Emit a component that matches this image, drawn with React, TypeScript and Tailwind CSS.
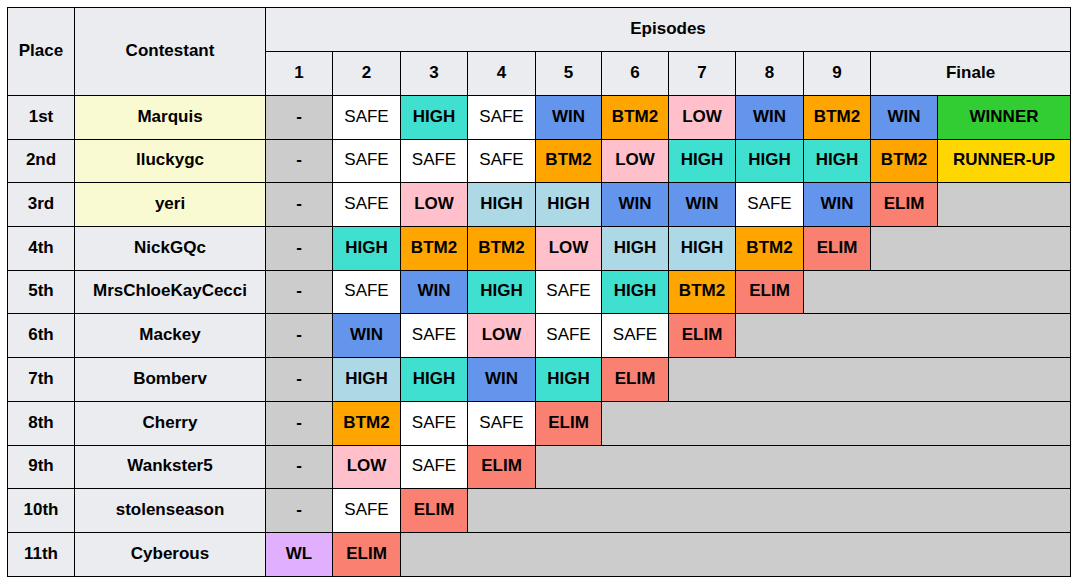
import React from "react";

type Result =
  | "-"
  | "SAFE"
  | "HIGH"
  | "TOP"
  | "WIN"
  | "LOW"
  | "BTM2"
  | "ELIM"
  | "WL"
  | "WINNER"
  | "RUNNER-UP";

interface Contestant {
  place: string;
  name: string;
  finalist?: boolean;
  results: Result[];
}

// HIGH = turquoise, TOP = light blue (shown as "HIGH")
const styles: Record<Result, string> = {
  "-": "bg-[#cccccc] font-bold",
  SAFE: "bg-white",
  HIGH: "bg-[#40e0d0] font-bold",
  TOP: "bg-[#add8e6] font-bold",
  WIN: "bg-[#6495ed] font-bold",
  LOW: "bg-[#ffc0cb] font-bold",
  BTM2: "bg-[#ffa500] font-bold",
  ELIM: "bg-[#fa8072] font-bold",
  WL: "bg-[#e0b0ff] font-bold",
  WINNER: "bg-[#32cd32] font-bold",
  "RUNNER-UP": "bg-[#ffd700] font-bold",
};

const contestants: Contestant[] = [
  {
    place: "1st",
    name: "Marquis",
    finalist: true,
    results: ["-", "SAFE", "HIGH", "SAFE", "WIN", "BTM2", "LOW", "WIN", "BTM2", "WIN", "WINNER"],
  },
  {
    place: "2nd",
    name: "lluckygc",
    finalist: true,
    results: ["-", "SAFE", "SAFE", "SAFE", "BTM2", "LOW", "HIGH", "HIGH", "HIGH", "BTM2", "RUNNER-UP"],
  },
  {
    place: "3rd",
    name: "yeri",
    finalist: true,
    results: ["-", "SAFE", "LOW", "TOP", "TOP", "WIN", "WIN", "SAFE", "WIN", "ELIM"],
  },
  {
    place: "4th",
    name: "NickGQc",
    results: ["-", "HIGH", "BTM2", "BTM2", "LOW", "TOP", "TOP", "BTM2", "ELIM"],
  },
  {
    place: "5th",
    name: "MrsChloeKayCecci",
    results: ["-", "SAFE", "WIN", "HIGH", "SAFE", "HIGH", "BTM2", "ELIM"],
  },
  {
    place: "6th",
    name: "Mackey",
    results: ["-", "WIN", "SAFE", "LOW", "SAFE", "SAFE", "ELIM"],
  },
  {
    place: "7th",
    name: "Bomberv",
    results: ["-", "TOP", "HIGH", "WIN", "HIGH", "ELIM"],
  },
  { place: "8th", name: "Cherry", results: ["-", "BTM2", "SAFE", "SAFE", "ELIM"] },
  { place: "9th", name: "Wankster5", results: ["-", "LOW", "SAFE", "ELIM"] },
  { place: "10th", name: "stolenseason", results: ["-", "SAFE", "ELIM"] },
  { place: "11th", name: "Cyberous", results: ["WL", "ELIM"] },
];

const TOTAL = 11;
const colWidths = [67, 191, 67, 68, 67, 68, 66, 67, 67, 68, 67, 67, 133];

const cell = "border border-black text-center align-middle px-0 pt-0 pb-[2px]";

export default function App() {
  return (
    <div
      className="min-h-screen bg-white pl-[7px] pt-[7px] text-black"
      style={{ fontFamily: '"Liberation Sans", Arial, sans-serif' }}
    >
      <table className="table-fixed border-collapse w-[1063px] text-[17px] leading-tight">
        <colgroup>
          {colWidths.map((w, i) => (
            <col key={i} style={{ width: w }} />
          ))}
        </colgroup>
        <thead>
          <tr className="h-[44px] bg-[#eaecf0] font-bold">
            <th rowSpan={2} className={cell}>
              Place
            </th>
            <th rowSpan={2} className={cell}>
              Contestant
            </th>
            <th colSpan={TOTAL} className={cell}>
              Episodes
            </th>
          </tr>
          <tr className="h-[44px] bg-[#eaecf0] font-bold">
            {[1, 2, 3, 4, 5, 6, 7, 8, 9].map((n) => (
              <th key={n} className={cell}>
                {n}
              </th>
            ))}
            <th colSpan={2} className={cell}>
              Finale
            </th>
          </tr>
        </thead>
        <tbody>
          {contestants.map((c) => {
            const rest = TOTAL - c.results.length;
            return (
              <tr key={c.place} className="h-[43.7px]">
                <td className={`${cell} bg-[#eaecf0] font-bold`}>{c.place}</td>
                <td
                  className={`${cell} font-bold ${
                    c.finalist ? "bg-[#fafad2]" : "bg-[#eaecf0]"
                  }`}
                >
                  {c.name}
                </td>
                {c.results.map((r, i) => (
                  <td key={i} className={`${cell} ${styles[r]}`}>
                    {r === "TOP" ? "HIGH" : r}
                  </td>
                ))}
                {rest > 0 && <td colSpan={rest} className={`${cell} bg-[#cccccc]`} />}
              </tr>
            );
          })}
        </tbody>
      </table>
    </div>
  );
}
